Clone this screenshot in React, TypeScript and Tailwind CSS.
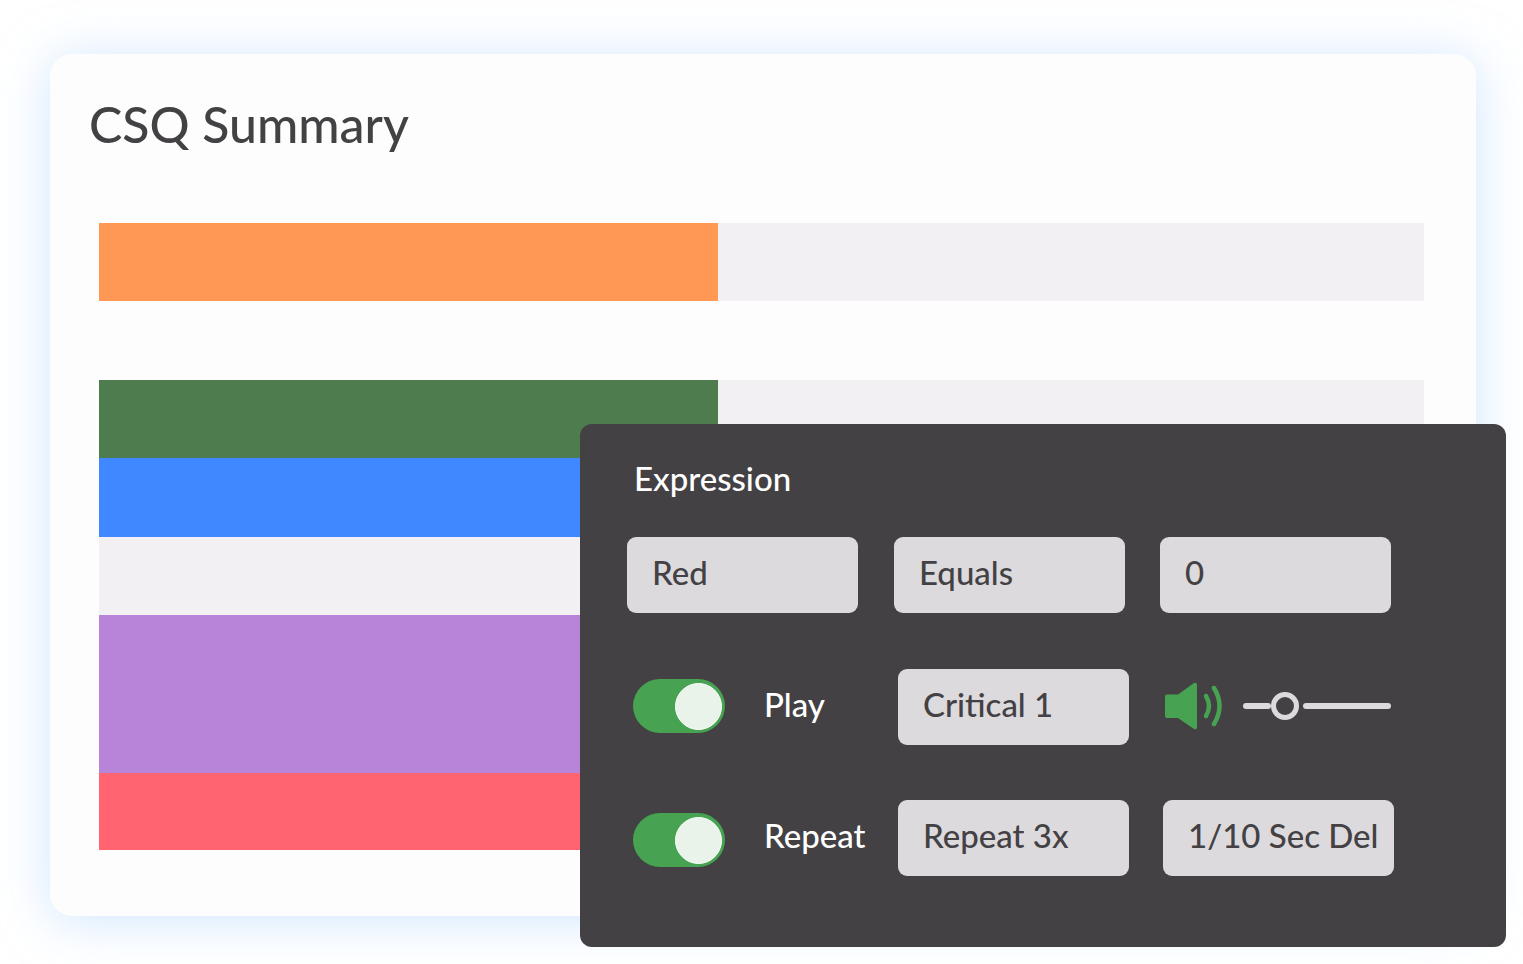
function Field({ label, className = "" }: { label: string; className?: string }) {
  return (
    <div className={`flex h-[76px] w-[231px] shrink-0 items-center rounded-[9px] bg-[#dcdadd] pb-[4px] pl-[25px] text-[33px] font-medium whitespace-nowrap text-[#434144] ${className}`}>
      {label}
    </div>
  )
}

function Toggle() {
  return (
    <div className="flex h-[54px] w-[92px] shrink-0 items-center justify-end rounded-full bg-[#47a352] pr-[3px]">
      <div className="h-[47px] w-[47px] rounded-full border border-white bg-[#e9f3ea]" />
    </div>
  )
}

function Speaker() {
  return (
    <svg width="58" height="48" viewBox="0 0 58 48" fill="none">
      <path d="M2 12.5 H13 L29 1 Q32 0 32 3 V45 Q32 48 29 47 L13 36 H2 Q0 36 0 34 V14.5 Q0 12.5 2 12.5 Z" fill="#47a352" />
      <path d="M41 14 Q47 24 41 34" stroke="#47a352" strokeWidth="4.5" strokeLinecap="round" />
      <path d="M49 6 Q60 24 49 42" stroke="#47a352" strokeWidth="4.5" strokeLinecap="round" />
    </svg>
  )
}

function Slider() {
  return (
    <div className="flex w-[148px] items-center">
      <div className="h-[6px] w-[28px] rounded-full bg-[#dcdadd]" />
      <div className="h-[28px] w-[28px] shrink-0 rounded-full border-[5px] border-[#dcdadd]" />
      <div className="ml-[4px] h-[6px] flex-1 rounded-full bg-[#dcdadd]" />
    </div>
  )
}

function Bar({ color, height = "h-[78px]" }: { color: string; height?: string }) {
  return (
    <div className={`${height} w-full bg-[#f2f0f3]`}>
      <div className={`h-full w-[619px] ${color}`} />
    </div>
  )
}

export default function App() {
  return (
    <div className="relative h-[964px] w-[1523px] overflow-hidden bg-white font-['Lato',sans-serif]">
      <div className="pt-[54px] pl-[50px]">
        <div className="h-[862px] w-[1426px] rounded-[22px] bg-[#fdfdfe] pt-[42px] pl-[49px] shadow-[0_4px_50px_rgba(170,210,255,0.55)]">
          <h1 className="-ml-[10px] h-[127px] text-[50px] leading-[56px] font-medium text-[#434144]">CSQ Summary</h1>
          <div className="w-[1325px]">
            <Bar color="bg-[#ff9855]" />
            <div className="mt-[79px]">
              <Bar color="bg-[#4f7c4e]" />
              <Bar color="bg-[#4088ff]" height="h-[79px]" />
              <Bar color="bg-[#f2f0f3]" />
              <Bar color="bg-[#b884da]" height="h-[158px]" />
              <Bar color="bg-[#ff6470]" height="h-[77px]" />
            </div>
          </div>
        </div>
      </div>

      <div className="absolute top-[424px] left-[580px] h-[523px] w-[926px] rounded-[12px] bg-[#434144] pt-[34px] pl-[47px]">
        <div className="ml-[7px] h-[79px] text-[33px] leading-[40px] font-medium text-white">Expression</div>
        <div className="flex gap-[36px]">
          <Field label="Red" />
          <Field label="Equals" />
          <Field label="0" className="-ml-[1px]" />
        </div>
        <div className="mt-[56px] flex items-center">
          <div className="mb-[2px] ml-[6px]"><Toggle /></div>
          <div className="ml-[39px] w-[134px] pb-[4px] text-[33px] font-medium text-white">Play</div>
          <Field label="Critical 1" />
          <div className="mb-[2px] ml-[36px]"><Speaker /></div>
          <div className="mb-[2px] ml-[20px]"><Slider /></div>
        </div>
        <div className="mt-[55px] flex items-center">
          <div className="mt-[4px] ml-[6px]"><Toggle /></div>
          <div className="ml-[39px] w-[134px] pb-[4px] text-[33px] font-medium text-white">Repeat</div>
          <Field label="Repeat 3x" />
          <Field label="1/10 Sec Del" className="ml-[34px]" />
        </div>
      </div>
    </div>
  )
}
